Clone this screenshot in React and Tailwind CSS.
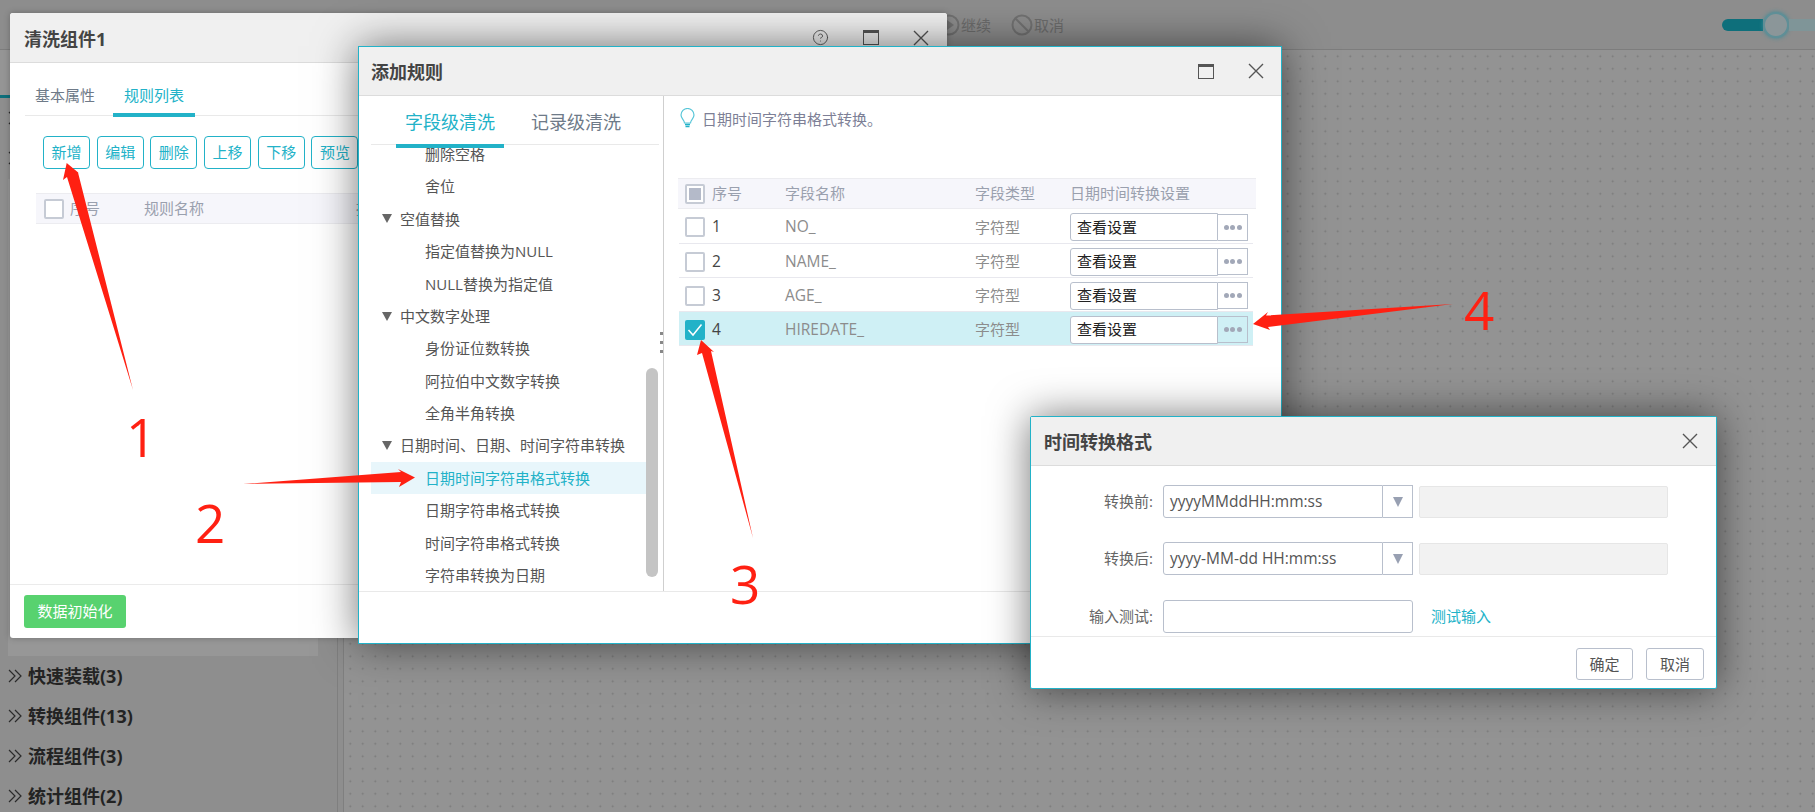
import React from "react";
import { CircleHelp } from "lucide-react";

const FONT = "[font-family:'Open_Sans','Noto_Sans_CJK_SC',sans-serif]";

function CloseIcon() {
  return (
    <svg width="16" height="16" viewBox="0 0 16 16" className="shrink-0">
      <path d="M1 1 L15 15 M15 1 L1 15" stroke="#555" strokeWidth="1.4" fill="none" />
    </svg>
  );
}
function MaxIcon() {
  return <div className="w-[16px] h-[15px] shrink-0 border-[1.5px] border-t-[3px] border-[#555]" />;
}
function Chevrons() {
  return (
    <svg width="14" height="14" viewBox="0 0 14 14" className="shrink-0">
      <path d="M1 1 L7 7 L1 13 M7 1 L13 7 L7 13" stroke="#2a2a2a" strokeWidth="1.2" fill="none" />
    </svg>
  );
}
function Check({ state }) {
  if (state === "checked") {
    return (
      <div className="w-[20px] h-[20px] shrink-0 rounded-[2px] bg-[#22b2c8] flex items-center justify-center">
        <svg width="16" height="14" viewBox="0 0 16 14">
          <path d="M1.5 7 L6 12 L14.5 1.5" stroke="#fff" strokeWidth="1.5" fill="none" />
        </svg>
      </div>
    );
  }
  return (
    <div className="w-[20px] h-[20px] shrink-0 rounded-[2px] border-2 border-[#c6cbd5] bg-white flex items-center justify-center">
      {state === "partial" && <div className="w-[12px] h-[12px] bg-[#b4bac9]" />}
    </div>
  );
}
function Caret() {
  return <div className="w-0 h-0 shrink-0 border-x-[5px] border-x-transparent border-t-[9px] border-t-[#666]" />;
}
function Dots() {
  return (
    <div className="flex gap-[1.5px]">
      <div className="w-[5px] h-[5px] rounded-full bg-[#a2a8b8]" />
      <div className="w-[5px] h-[5px] rounded-full bg-[#a2a8b8]" />
      <div className="w-[5px] h-[5px] rounded-full bg-[#a2a8b8]" />
    </div>
  );
}

const listRows = [
  { t: "删除空格", c: 1 },
  { t: "舍位", c: 1 },
  { t: "空值替换", c: 0 },
  { t: "指定值替换为NULL", c: 1 },
  { t: "NULL替换为指定值", c: 1 },
  { t: "中文数字处理", c: 0 },
  { t: "身份证位数转换", c: 1 },
  { t: "阿拉伯中文数字转换", c: 1 },
  { t: "全角半角转换", c: 1 },
  { t: "日期时间、日期、时间字符串转换", c: 0 },
  { t: "日期时间字符串格式转换", c: 1, on: 1 },
  { t: "日期字符串格式转换", c: 1 },
  { t: "时间字符串格式转换", c: 1 },
  { t: "字符串转换为日期", c: 1 },
];

const tableRows = [
  { n: "1", f: "NO_" },
  { n: "2", f: "NAME_" },
  { n: "3", f: "AGE_" },
  { n: "4", f: "HIREDATE_", on: 1 },
];

function Background() {
  return (
    <div className="flex flex-col w-full h-full">
      <div className="h-[50px] shrink-0 border-b border-[#7d7d7d] bg-[#8d8d8d] flex items-center pl-[947px] text-[15px] leading-[22px] text-[#6c6c6c] whitespace-nowrap">
        <svg width="13" height="22" viewBox="0 0 13 22" className="shrink-0">
          <circle cx="2" cy="11" r="9.5" stroke="#727272" strokeWidth="2" fill="none" />
          <path d="M0 6 L7 11 L0 16 Z" fill="#727272" />
        </svg>
        <span className="ml-[1px]">继续</span>
        <svg width="22" height="22" viewBox="0 0 22 22" className="ml-[20px] shrink-0">
          <circle cx="11" cy="11" r="9.5" stroke="#727272" strokeWidth="2" fill="none" />
          <path d="M4.5 4.5 L17.5 17.5" stroke="#727272" strokeWidth="2" />
        </svg>
        <span className="ml-[1px]">取消</span>
        <div className="ml-auto flex items-center">
          <div className="w-[41px] h-[12px] rounded-l-full bg-[#0e6f7b]" />
          <div className="w-[26px] h-[26px] shrink-0 rounded-full bg-[#8b9699] border-2 border-[#5f8f97] shadow-[0_0_4px_#3f8c98]" />
          <div className="w-[26px] h-[12px] bg-[#7f9598]" />
        </div>
      </div>
      <div className="flex flex-1 min-h-0">
        <div className="w-[338px] shrink-0 h-full bg-[#8e8e8e] border-r border-[#7f7f7f] flex">
          <div className="w-[324px] flex flex-col">
            <div className="h-[48px] shrink-0 bg-[#959595] border-b-[3px] border-[#0e6f7b]" />
            <div className="h-[40px] shrink-0 pl-[8px] flex items-center"><Chevrons /></div>
            <div className="h-[40px] shrink-0 pl-[8px] flex items-center"><Chevrons /></div>
            <div className="h-[477px] shrink-0 ml-[8px] mr-[6px] bg-[#979797] mt-[1px]" />
            {["快速装载(3)", "转换组件(13)", "流程组件(3)", "统计组件(2)"].map((t) => (
              <div key={t} className="h-[40px] shrink-0 pl-[8px] flex items-center gap-[6px] text-[18px] leading-[24px] font-bold text-[#232323]">
                <Chevrons />
                <span>{t}</span>
              </div>
            ))}
          </div>
        </div>
        <div className="w-[6px] shrink-0 bg-[#8e8e8e] border-r border-[#7f7f7f]" />
        <div className="flex-1 bg-[#939393] bg-[radial-gradient(circle,#787878_0.8px,transparent_1.1px)] bg-[length:12.5px_12.5px]" />
      </div>
    </div>
  );
}

function DialogOne() {
  return (
    <div className="absolute left-[10px] top-[13px] w-[937px] h-[625px] flex flex-col rounded-[3px] bg-white shadow-[0_0_6px_rgba(0,0,0,0.25)]">
      <div className="h-[50px] shrink-0 bg-[#f0f0f0] border-b border-[#dcdcdc] pl-[14px] pr-[18px] flex items-center justify-between rounded-t-[3px]">
        <span className="pt-[2px] text-[18px] leading-[24px] font-bold text-[#444]">清洗组件1</span>
        <div className="flex items-center gap-[34px]">
          <CircleHelp size={17} strokeWidth={1.3} color="#555" />
          <MaxIcon />
          <CloseIcon />
        </div>
      </div>
      <div className="ml-[15px] mr-[14px] h-[53px] shrink-0 border-b border-[#e9e9e9] flex gap-[8px] text-[15px] leading-[22px]">
        <div className="w-[80px] pt-[21px] text-center text-[#6e7a88]">基本属性</div>
        <div className="w-[82px] h-[54px] pt-[21px] text-center text-[#22b2c8] border-b-4 border-[#22b2c8]">规则列表</div>
      </div>
      <div className="mt-[20px] ml-[33px] flex gap-[6.7px] text-[15px] text-[#22b2c8]">
        {["新增", "编辑", "删除", "上移", "下移", "预览"].map((t) => (
          <div key={t} className="w-[47px] h-[33px] flex items-center justify-center rounded-[4px] border border-[#22b2c8]">{t}</div>
        ))}
      </div>
      <div className="mt-[24px] ml-[26px] h-[31px] pl-[8px] bg-[#f6f6fb] border-y border-[#ececf0] flex items-center text-[15px] text-[#9aa0ae]">
        <Check />
        <span className="ml-[6px] w-[74px]">序号</span>
        <span className="w-[212px]">规则名称</span>
        <span>描述</span>
      </div>
      <div className="flex-1" />
      <div className="h-[54px] shrink-0 border-t border-[#ebebeb] pl-[14px] pt-[10px]">
        <div className="w-[102px] h-[33px] rounded-[3px] bg-[#58d26f] text-white text-[15px] flex items-center justify-center">数据初始化</div>
      </div>
    </div>
  );
}

function DialogTwo() {
  return (
    <div className="absolute left-[358px] top-[46px] w-[924px] h-[598px] flex flex-col border border-[#22b2c8] bg-white shadow-[0_0_40px_rgba(0,0,0,0.55)]">
      <div className="h-[49px] shrink-0 bg-[#f0f0f0] border-b border-[#dcdcdc] pl-[12px] pr-[17px] flex items-center justify-between">
        <span className="pt-[2px] text-[18px] leading-[24px] font-bold text-[#444]">添加规则</span>
        <div className="flex items-center gap-[34px]">
          <MaxIcon />
          <CloseIcon />
        </div>
      </div>
      <div className="flex flex-1 min-h-0">
        <div className="relative w-[305px] shrink-0 border-r border-[#cfcfcf] flex flex-col">
          <div className="relative z-10 ml-[12px] mr-[4px] h-[49px] shrink-0 border-b border-[#e9e9e9] bg-white flex pl-[25px] gap-[18px] text-[18px] leading-[24px]">
            <div className="w-[108px] h-[52px] pt-[14px] text-center text-[#22b2c8] border-b-4 border-[#22b2c8]">字段级清洗</div>
            <div className="w-[108px] pt-[14px] text-center text-[#6e7a88]">记录级清洗</div>
          </div>
          <div className="flex-1 min-h-0 flex overflow-hidden pl-[12px]">
            <div className="w-[275px] shrink-0 -mt-[7px]">
              {listRows.map((r) => (
                <div
                  key={r.t}
                  className={
                    "h-[32.4px] flex items-center text-[15px] " +
                    (r.on ? "bg-[#e8f6fb] text-[#22b2c8] " : "text-[#555] ") +
                    (r.c ? "pl-[54px]" : "pl-[11px] gap-[8px]")
                  }
                >
                  {!r.c && <Caret />}
                  <span>{r.t}</span>
                </div>
              ))}
            </div>
            <div className="w-[12px] h-[209px] mt-[223px] shrink-0 rounded-full bg-[#c4c4c4]" />
          </div>
          <div className="absolute right-[0px] top-[236px] flex flex-col gap-[6px] -mr-[1px] pr-[1px]">
            <div className="w-[3px] h-[3px] bg-[#888]" />
            <div className="w-[3px] h-[3px] bg-[#888]" />
            <div className="w-[3px] h-[3px] bg-[#888]" />
          </div>
        </div>
        <div className="flex-1 flex flex-col pl-[14px]">
          <div className="h-[82px] shrink-0 pl-[2px] pt-[12px] flex items-start gap-[7px] text-[15px] leading-[22px] text-[#7d7f96]">
            <svg width="15" height="21" viewBox="0 0 15 21" className="shrink-0">
              <path d="M4.5 15 C4.5 12 1 10.5 1 7 A6.5 6.5 0 0 1 14 7 C14 10.5 10.5 12 10.5 15 Z" fill="none" stroke="#58c6d8" strokeWidth="1.2" />
              <path d="M5 16.5 H10 M5.5 18.5 H9.5" stroke="#22b2c8" strokeWidth="1.6" />
            </svg>
            <span>日期时间字符串格式转换。</span>
          </div>
          <div className="w-[578px]">
            <div className="h-[31px] grid grid-cols-[107px_190px_95px_1fr] items-center bg-[#f6f6fb] border-y border-[#ececf0] text-[15px] text-[#9aa0ae]">
              <div className="pl-[7px] flex items-center gap-[7px]"><Check state="partial" /><span>序号</span></div>
              <div>字段名称</div>
              <div>字段类型</div>
              <div>日期时间转换设置</div>
            </div>
            {tableRows.map((r, i) => (
              <div
                key={r.n}
                className={
                  "w-[574px] ml-[1px] pt-[2px] grid grid-cols-[106px_190px_95px_1fr] items-center border-b border-[#e8e8ee] text-[15px] text-[#8c8c8c] " +
                  (i === 0 ? "h-[35px] " : "h-[34px] ") +
                  (r.on ? "bg-[#cff0f5]" : "")
                }
              >
                <div className="pl-[6px] flex items-center gap-[7px] text-[#444]"><Check state={r.on ? "checked" : ""} /><span className="text-[15.5px]">{r.n}</span></div>
                <div className="text-[15.5px]">{r.f}</div>
                <div>字符型</div>
                <div className="flex items-center">
                  <div className="w-[148px] h-[28px] rounded-l-[3px] border border-[#b8bfcc] bg-white pl-[6px] flex items-center text-[#222]">查看设置</div>
                  <div className="w-[30px] h-[27px] border border-l-0 border-[#b8bfcc] flex items-center justify-center"><Dots /></div>
                </div>
              </div>
            ))}
          </div>
        </div>
      </div>
      <div className="h-[52px] shrink-0 border-t border-[#e9e9e9]" />
    </div>
  );
}

function Select({ value }) {
  return (
    <>
      <div className="w-[220px] h-[33px] rounded-l-[3px] border border-[#b8bfcc] pl-[6px] flex items-center text-[15.5px] text-[#555]">{value}</div>
      <div className="w-[30px] h-[33px] border border-l-0 border-[#b8bfcc] flex items-center justify-center">
        <div className="w-0 h-0 border-x-[5px] border-x-transparent border-t-[10px] border-t-[#98a0b2]" />
      </div>
      <div className="ml-[6px] w-[249px] h-[32px] rounded-[2px] border border-[#e6e6e6] bg-[#f2f2f2]" />
    </>
  );
}

function DialogThree() {
  return (
    <div className="absolute left-[1030px] top-[416px] w-[687px] h-[273px] flex flex-col border border-[#22b2c8] bg-white rounded-[2px] shadow-[0_0_40px_rgba(0,0,0,0.55)]">
      <div className="h-[49px] shrink-0 bg-[#f0f0f0] border-b border-[#dcdcdc] pl-[13px] pr-[18px] flex items-center justify-between">
        <span className="pt-[2px] text-[18px] leading-[24px] font-bold text-[#444]">时间转换格式</span>
        <CloseIcon />
      </div>
      <div className="flex-1 pt-[19px] flex flex-col gap-[25px] overflow-hidden">
        <div className="flex items-center h-[33px]">
          <div className="w-[122px] mr-[10px] text-right text-[15px] text-[#666]">转换前:</div>
          <Select value="yyyyMMddHH:mm:ss" />
        </div>
        <div className="flex items-center h-[33px] -mt-[1px]">
          <div className="w-[122px] mr-[10px] text-right text-[15px] text-[#666]">转换后:</div>
          <Select value="yyyy-MM-dd HH:mm:ss" />
        </div>
        <div className="flex items-center h-[33px]">
          <div className="w-[122px] mr-[10px] text-right text-[15px] text-[#666]">输入测试:</div>
          <div className="w-[250px] h-[33px] rounded-[3px] border border-[#b8bfcc]" />
          <span className="ml-[18px] text-[15px] text-[#22b2c8]">测试输入</span>
        </div>
      </div>
      <div className="h-[52px] shrink-0 border-t border-[#e9e9e9] flex justify-end gap-[13px] pr-[12px] pt-[11px]">
        <div className="w-[57px] h-[32px] rounded-[3px] border border-[#b8bfcc] flex items-center justify-center text-[15px] text-[#555]">确定</div>
        <div className="w-[58px] h-[32px] rounded-[3px] border border-[#b8bfcc] flex items-center justify-center text-[15px] text-[#555]">取消</div>
      </div>
    </div>
  );
}

function Arrows() {
  return (
    <svg width="1815" height="812" viewBox="0 0 1815 812" className="absolute left-0 top-0 pointer-events-none">
      <g fill="#ff2012">
        <polygon points="66.7,163 80,174 78,172.5 133,390 67,177 63,180" />
        <polygon points="243,484 401,472 398,469 415,477.5 399,487 401,482" />
        <polygon points="701,340 714,352 711,351 753,538 702,353 697,355" />
        <polygon points="1453,304 1266,315.5 1268,312 1253,324 1270,330 1268,327" />
      </g>
    </svg>
  );
}

function Num({ className, children }) {
  return (
    <div className={"absolute text-[53px] leading-[60px] font-normal text-[#ff2012] [font-family:'Open_Sans',sans-serif] " + className}>{children}</div>
  );
}

export default function App() {
  return (
    <div className={"relative w-[1815px] h-[812px] overflow-hidden bg-[#8f8f8f] " + FONT}>
      <Background />
      <DialogOne />
      <DialogTwo />
      <DialogThree />
      <Arrows />
      <Num className="left-[126px] top-[407px]">1</Num>
      <Num className="left-[195px] top-[493px]">2</Num>
      <Num className="left-[730px] top-[554px]">3</Num>
      <Num className="left-[1464px] top-[280px]">4</Num>
    </div>
  );
}
